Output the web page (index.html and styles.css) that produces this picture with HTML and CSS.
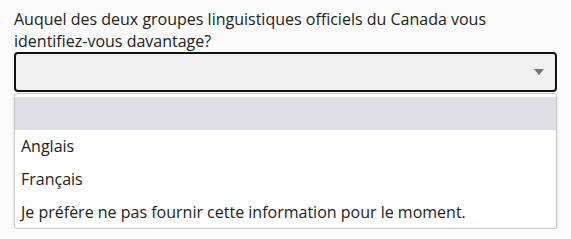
FILE: index.html
```html
<!DOCTYPE html>
<html lang="fr">
<head>
    <meta charset="UTF-8">
    <meta name="viewport" content="width=device-width, initial-scale=1.0">
    <title>Groupe linguistique</title>
    <link rel="stylesheet" href="styles.css">
</head>
<body>
    <div class="question">
        <label class="question-label" for="langGroup">Auquel des deux groupes linguistiques officiels du Canada vous identifiez-vous davantage?</label>

        <!-- Combobox with its list open -->
        <div class="combo">
            <div class="combo-field" id="langGroup">
                <svg class="combo-arrow" width="10" height="6" viewBox="0 0 10 6">
                    <path d="M0 0 H10 L5 6 Z" fill="#757575"/>
                </svg>
            </div>
            <ul class="combo-list">
                <li class="combo-option active">&nbsp;</li>
                <li class="combo-option">Anglais</li>
                <li class="combo-option">Français</li>
                <li class="combo-option">Je préfère ne pas fournir cette information pour le moment.</li>
            </ul>
        </div>
    </div>
</body>
</html>
```

FILE: styles.css
```css
/* General Styles */
body {
    font-family: 'Open Sans', 'Noto Sans', sans-serif;
    font-size: 16px;
    color: #222;
    margin: 0;
    background-color: #fbfbfb;
}

.question {
    padding: 8px 14px 0 14px;
}

.question-label {
    display: block;
    line-height: 22px;
    max-width: 500px;
    margin-bottom: 0;
}

/* Select field */
.combo {
    width: 543px;
}

.combo-field {
    height: 36px;
    border: 2px solid #111;
    border-radius: 4px;
    background-color: #f1f1f1;
    display: flex;
    align-items: center;
    justify-content: flex-end;
    padding-right: 11px;
}

/* Dropdown list */
.combo-list {
    list-style: none;
    margin: 1px 0 0 0;
    padding: 3px 0 0 0;
    height: 131px;
    overflow: hidden;
    background: white;
    border: 1px solid #c8c8c8;
    border-radius: 3px;
    box-shadow: 0 1px 3px rgba(0, 0, 0, 0.15);
}

.combo-option {
    height: 33px;
    line-height: 33px;
    padding: 0 6px;
    white-space: nowrap;
}

.combo-option.active {
    background-color: #e0dfe5;
}
```
